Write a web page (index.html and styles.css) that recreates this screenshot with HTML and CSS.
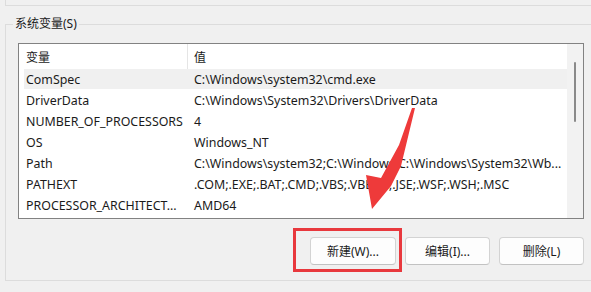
FILE: index.html
```html
<!DOCTYPE html>
<html lang="zh">
<head>
<meta charset="utf-8">
<link rel="stylesheet" href="styles.css">
</head>
<body>
<div class="page">
  <div class="prev-group"></div>
  <fieldset class="group">
    <legend class="legend">系统变量(S)</legend>
    <div class="inner">
      <div class="listview">
        <div class="list">
          <div class="header">
            <div class="hcell hcell-name">变量</div>
            <div class="hcell hcell-value">值</div>
          </div>
          <div class="row row-hot"><span class="c1">ComSpec</span><span class="c2">C:\Windows\system32\cmd.exe</span></div>
          <div class="row"><span class="c1">DriverData</span><span class="c2">C:\Windows\System32\Drivers\DriverData</span></div>
          <div class="row"><span class="c1">NUMBER_OF_PROCESSORS</span><span class="c2">4</span></div>
          <div class="row"><span class="c1">OS</span><span class="c2">Windows_NT</span></div>
          <div class="row"><span class="c1">Path</span><span class="c2">C:\Windows\system32;C:\Windows;C:\Windows\System32\Wb...</span></div>
          <div class="row"><span class="c1">PATHEXT</span><span class="c2">.COM;.EXE;.BAT;.CMD;.VBS;.VBE;.JS;.JSE;.WSF;.WSH;.MSC</span></div>
          <div class="row"><span class="c1">PROCESSOR_ARCHITECT...</span><span class="c2">AMD64</span></div>
        </div>
        <div class="scrollbar"><div class="thumb"></div></div>
      </div>
      <div class="buttons">
        <button class="btn">新建(W)...</button>
        <button class="btn">编辑(I)...</button>
        <button class="btn">删除(L)</button>
      </div>
    </div>
  </fieldset>
  <div class="highlight-box"></div>
  <svg class="arrow" width="591" height="292" viewBox="0 0 591 292">
    <polygon points="415,108 401,166 396,176 391,186 372,209 366,175 381,178 399,145 412,108" fill="#ee3a3a"/>
  </svg>
</div>
</body>
</html>
```
FILE: styles.css
```css
html, body {
  margin: 0;
  padding: 0;
  background: #f0f0f0;
}
body {
  width: 591px;
  height: 292px;
  overflow: hidden;
  font-family: "Noto Sans", "Noto Sans CJK SC", sans-serif;
  font-size: 12px;
  color: #1a1a1a;
}
.page {
  position: relative;
  width: 591px;
  height: 292px;
  overflow: hidden;
}
.prev-group {
  margin-left: 5px;
  width: 620px;
  height: 6px;
  border-left: 1px solid #dcdcdc;
  border-bottom: 1px solid #dcdcdc;
  box-sizing: border-box;
  margin-top: 0;
}
.group {
  margin: 10px 0 0 5px;
  padding: 0 0 15px 12px;
  width: 640px;
  border: 1px solid #dcdcdc;
  box-sizing: border-box;
  min-width: 0;
}
.legend {
  padding: 0 2px;
  margin-left: -5px;
  line-height: 16px;
  height: 16px;
}
.inner {
  width: 566px;
  padding-top: 11px;
}
.listview {
  display: flex;
  height: 176px;
  border: 1px solid #828282;
  background: #ffffff;
  box-sizing: border-box;
}
.list {
  flex: 1;
  padding-left: 5px;
  overflow: hidden;
  font-size: 12.4px;
}
.header {
  display: flex;
  height: 25px;
  align-items: stretch;
  font-size: 12px;
}
.hcell {
  display: flex;
  align-items: center;
}
.hcell-name {
  width: 161px;
  padding-left: 2px;
  border-right: 1px solid #e5e5e5;
}
.hcell-value {
  padding-left: 6px;
}
.row {
  display: flex;
  align-items: center;
  height: 21px;
  white-space: nowrap;
}
.row-hot {
  height: 20px;
  margin-bottom: 1px;
  background: #f0f0f0;
}
.c1 {
  width: 166px;
  padding-left: 2px;
  flex: none;
}
.c2 {
  padding-left: 2px;
}
.scrollbar {
  width: 16px;
  flex: none;
  background: #f2f2f2;
  display: flex;
  justify-content: center;
  padding-top: 18px;
  box-sizing: border-box;
}
.thumb {
  width: 2px;
  height: 60px;
  background: #8a8a8a;
  border-radius: 1px;
}
.buttons {
  display: flex;
  justify-content: flex-end;
  gap: 9px;
  margin-top: 18px;
}
.btn {
  width: 85px;
  height: 28px;
  border: 1px solid #d3d3d3;
  border-bottom-color: #c2c2c2;
  border-radius: 4px;
  background: #fdfdfd;
  font-family: "Noto Sans", "Noto Sans CJK SC", sans-serif;
  font-size: 12px;
  color: #1a1a1a;
  padding: 0;
}
.btn:first-child {
  width: 86px;
}
.highlight-box {
  position: absolute;
  left: 293px;
  top: 228px;
  width: 109px;
  height: 44px;
  border: 3px solid #e8383d;
  box-sizing: border-box;
}
.arrow {
  position: absolute;
  left: 0;
  top: 0;
  pointer-events: none;
}
```
